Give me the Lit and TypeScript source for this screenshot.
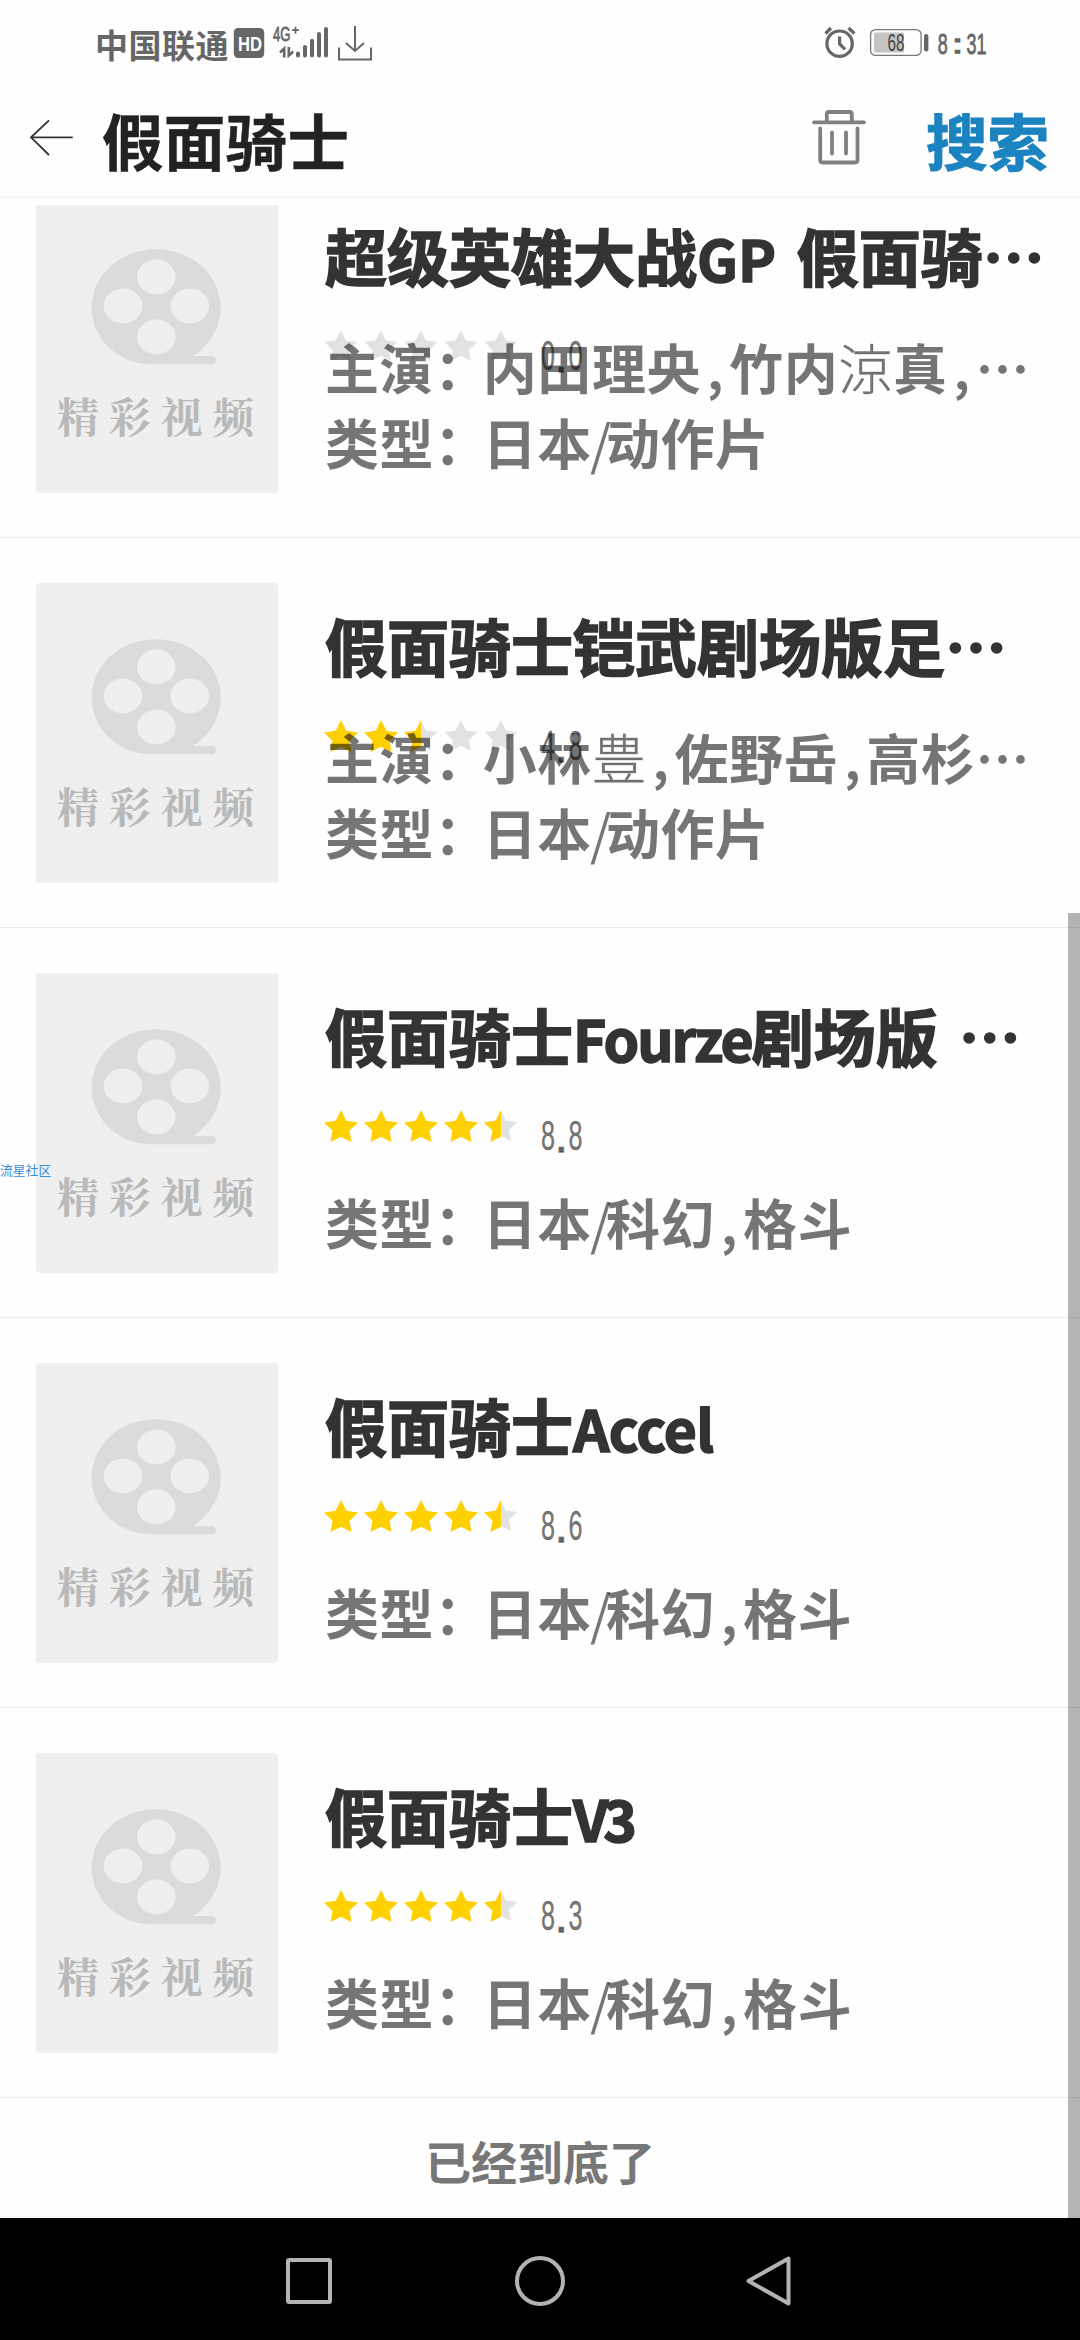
import { LitElement, html, svg, css, nothing } from "lit";
import { customElement, property } from "lit/decorators.js";
import { styleMap } from "lit/directives/style-map.js";

/** A piece of a line: plain text, or Latin text with its own tracking. */
type Run = string | { text: string; kind: "latin" | "colon" | "slash" | "comma" | "thin"; track?: number };

interface Movie {
  title: Run[];
  stars: number;
  score: string;
  cast?: Run[];
  genre: Run[];
}

const colon: Run = { text: "：", kind: "colon" };
const slash: Run = { text: "/", kind: "slash" };
const comma: Run = { text: ",", kind: "comma" };
const space: Run = { text: " ", kind: "latin", track: 8 };

const movies: Movie[] = [
  {
    title: ["超级英雄大战", { text: "GP", kind: "latin" }, space, "假面骑…"],
    stars: 0,
    score: "0.0",
    cast: ["主演", colon, "内田理央", comma, "竹内", { text: "涼", kind: "thin" }, "真", comma, "…"],
    genre: ["类型", colon, "日本", slash, "动作片"],
  },
  {
    title: ["假面骑士铠武剧场版足…"],
    stars: 2.5,
    score: "4.8",
    cast: ["主演", colon, "小林", { text: "豊", kind: "thin" }, comma, "佐野岳", comma, "高杉…"],
    genre: ["类型", colon, "日本", slash, "动作片"],
  },
  {
    title: ["假面骑士", { text: "Fourze", kind: "latin", track: -1.9 }, "剧场版", space, "…"],
    stars: 4.5,
    score: "8.8",
    genre: ["类型", colon, "日本", slash, "科幻", comma, "格斗"],
  },
  {
    title: ["假面骑士", { text: "Accel", kind: "latin", track: -0.8 }],
    stars: 4.5,
    score: "8.6",
    genre: ["类型", colon, "日本", slash, "科幻", comma, "格斗"],
  },
  {
    title: ["假面骑士", { text: "V3", kind: "latin", track: -5 }],
    stars: 4.5,
    score: "8.3",
    genre: ["类型", colon, "日本", slash, "科幻", comma, "格斗"],
  },
];

const renderRuns = (runs: Run[]) =>
  runs.map((run) =>
    typeof run === "string"
      ? run
      : html`<span class=${run.kind} style=${run.track ? styleMap({ letterSpacing: `${run.track}px` }) : nothing}>${run.text}</span>`,
  );

@customElement("status-bar")
class StatusBar extends LitElement {
  static styles = css`
    :host { display: flex; height: 86px; align-items: flex-start; justify-content: space-between; padding: 0 90px 0 95px; box-sizing: border-box; color: #666; }
    .left, .right { display: flex; }
    .carrier { font: 700 33px/48px "Noto Sans CJK SC", sans-serif; letter-spacing: 0.5px; margin-top: 19.500px; width: 135px; white-space: nowrap; }
    svg { display: block; overflow: visible; }
    text { font-family: "Liberation Sans", sans-serif; fill: #666; }
    .hd { fill: #fff; font-weight: 700; }
    .pct { fill: #444; }
  `;
  render() {
    return html`
      <div class="left">
        <span class="carrier">中国联通</span>
        <svg width="150" height="86" viewBox="230 0 150 86">
          <rect x="233.8" y="28" width="30.4" height="30" rx="4.5" fill="#666" />
          <text class="hd" x="238" y="50.6" font-size="21" textLength="24" lengthAdjust="spacingAndGlyphs">HD</text>
          <text x="273" y="41" font-size="20" textLength="17.5" lengthAdjust="spacingAndGlyphs" stroke="#666" stroke-width=".8">4G</text>
          <path d="M292 30.2h7M295.500 26.800v7" stroke="#666" stroke-width="1.7" />
          <path d="M284.200 57.500V48.500L280 52.500M288.800 47v8.500L293.200 51.500" fill="none" stroke="#666" stroke-width="2.600" />
          <g stroke="#666" stroke-width="4" stroke-linecap="round">
            <path d="M298 53.500v2M305 47v8.500M312 40.700v14.800M319 34v21.500M326 29v26.500" />
          </g>
          <path d="M355 26v25M346 43l9 8 9-8M339 47.500v12h32v-12" fill="none" stroke="#666" stroke-width="2" />
        </svg>
      </div>
      <div class="right">
        <svg width="170" height="86" viewBox="820 0 170 86">
          <g fill="none" stroke="#666" stroke-width="3.200">
            <circle cx="839.600" cy="43.700" r="12.700" />
            <path d="M839.600 36.500v7.500l5.500 5.300" />
            <path d="M825.500 33.500l5.500-5.500M848.500 28l6 5.500" />
          </g>
          <rect x="870.600" y="29.600" width="50.500" height="25.800" rx="5" fill="none" stroke="#777" stroke-width="1.300" />
          <rect x="874" y="32.500" width="30" height="20" rx="1.500" fill="#c4c4c4" />
          <rect x="924" y="34" width="4.400" height="17.500" rx="2.200" fill="#666" />
          <text class="pct" x="887.500" y="50.500" font-size="23" textLength="17" lengthAdjust="spacingAndGlyphs">68</text>
          <g stroke="#666" stroke-width=".8">
            <text x="937.800" y="54" font-size="30" textLength="10" lengthAdjust="spacingAndGlyphs">8</text>
            <text x="952.500" y="53" font-size="25" textLength="10" lengthAdjust="spacingAndGlyphs" stroke-width="1.500">:</text>
            <text x="966.500" y="54" font-size="30" textLength="20" lengthAdjust="spacingAndGlyphs">31</text>
          </g>
        </svg>
      </div>
    `;
  }
}

@customElement("search-header")
class SearchHeader extends LitElement {
  static styles = css`
    :host { display: flex; height: 112px; box-sizing: border-box; border-bottom: 2px solid #f6f6f6; font: 700 61.500px/90px "Noto Sans CJK SC", sans-serif; padding: 9px 31px 0 28px; }
    svg { display: block; flex: none; }
    .back { width: 48px; height: 60px; margin: 12px 26px 0 0; }
    .query { flex: 1; color: #222; letter-spacing: 0.3px; -webkit-text-stroke: 0.5px #222; }
    .trash { width: 60px; height: 70px; margin: 5px 57px 0 0; }
    .go { color: #1b83bf; -webkit-text-stroke: 1px #1b83bf; white-space: nowrap; }
  `;
  render() {
    return html`
      <svg class="back" viewBox="28 107 48 60">
        <path d="M72.700 137.300H31M49 120.300L31 137.300L49 155" fill="none" stroke="#333" stroke-width="1.800" />
      </svg>
      <div class="query">假面骑士</div>
      <svg class="trash" viewBox="809 100 60 70">
        <g fill="none" stroke="#808080" stroke-width="3.800" stroke-linecap="round" stroke-linejoin="round">
          <path d="M814 122.300h50M826.800 121v-7q0-2 2-2h21q2 0 2 2v7" />
          <path d="M820.200 128.500v31.500q0 2.500 2.500 2.500h32.300q2.500 0 2.500-2.500v-31.500M832 132.500v21M846 132.500v21" />
        </g>
      </svg>
      <div class="go">搜索</div>
    `;
  }
}

@customElement("star-rating")
class StarRating extends LitElement {
  @property({ type: Number }) value = 0;
  static styles = css`
    :host { display: flex; gap: 6px; }
    svg { display: block; width: 34px; height: 32px; }
  `;
  render() {
    const outline = "17,0 22.300,10.700 34,12.400 25.500,20.700 27.500,32 17,26.700 6.500,32 8.500,20.700 0,12.400 11.700,10.700";
    const half = "17,0 17,26.700 6.500,32 8.500,20.700 0,12.400 11.700,10.700";
    return [0, 1, 2, 3, 4].map((i) => {
      const rest = this.value - i;
      return html`<svg viewBox="0 0 34 32">
        ${rest < 1
          ? svg`<polygon points=${outline} fill="#e2e2e2" transform="translate(.5 .2) scale(.96)" />`
          : svg`<polygon points=${outline} fill="#ffd000" />`}
        ${rest === 0.5 ? svg`<polygon points=${half} fill="#ffd000" />` : nothing}
      </svg>`;
    });
  }
}

@customElement("movie-poster")
class MoviePoster extends LitElement {
  static styles = css`
    :host { display: flex; flex-direction: column; width: 242px; height: 300px; border-radius: 4px; background: #efefef; flex: none; }
    svg { display: block; width: 242px; height: 180px; }
    .caption { font: 700 42px/60px "Noto Serif CJK SC", "Noto Sans CJK SC", serif; letter-spacing: 9.800px; color: #b9b9b9; padding-left: 21px; white-space: nowrap; margin-top: 12px; }
  `;
  render() {
    return html`
      <svg viewBox="0 0 242 180">
        <path d="M120 56.300C156 56.300 184.700 82 184.700 115C184.700 135 173 153 157 163H176a4 4 0 0 1 0 8.300H113C81 170 55.700 145 55.700 115C55.700 82 84 56.300 120 56.300Z" fill="#dbdbdb" />
        <g fill="#efefef">
          <ellipse cx="120.300" cy="84" rx="19.300" ry="17.400" />
          <ellipse cx="87" cy="113" rx="19.300" ry="17.400" />
          <ellipse cx="153.800" cy="113" rx="19.300" ry="17.400" />
          <ellipse cx="120.300" cy="144" rx="19.300" ry="17.400" />
        </g>
      </svg>
      <div class="caption">精彩视频</div>
    `;
  }
}

@customElement("movie-row")
class MovieRow extends LitElement {
  @property({ attribute: false }) movie!: Movie;
  static styles = css`
    :host { display: flex; height: 390px; box-sizing: border-box; border-bottom: 1px solid #ececec; padding: 45px 0 0 36px; font-family: "Noto Sans CJK SC", sans-serif; white-space: pre; }
    .info { display: flex; flex-direction: column; margin-left: 47px; }
    .title { height: 130px; line-height: 124px; font-size: 62px; font-weight: 700; color: #333; -webkit-text-stroke: 1.600px #333; }
    .title .latin { font-size: 57px; }
    .rating { display: flex; height: 83.500px; box-sizing: border-box; padding-top: 7px; margin-left: -1px; }
    .score { display: block; width: 50px; height: 50px; margin-left: 21px; overflow: visible; }
    .score text { font-family: "Liberation Sans", sans-serif; font-size: 43px; fill: rgba(0, 0, 0, 0.54); }
    .digit { stroke: rgba(0, 0, 0, 0.4); stroke-width: 0.6px; }
    .line { height: 75px; line-height: 69px; font-size: 54px; letter-spacing: 0.600px; font-weight: 700; color: rgba(0, 0, 0, 0.54); }
    .cast { margin-top: -75px; }
    .colon { letter-spacing: -5.500px; }
    .slash, .comma { display: inline-block; font-weight: 400; letter-spacing: 0; }
    .slash { width: 14px; text-indent: -2px; }
    .comma { width: 28px; text-indent: 6px; font-weight: 700; font-size: 50px; }
    .thin { font-weight: 300; font-family: "Noto Sans CJK JP", sans-serif; -webkit-text-stroke: 0.4px rgba(0, 0, 0, 0.4); }
  `;
  render() {
    const m = this.movie;
    return html`
      <movie-poster></movie-poster>
      <div class="info"
        ><div class="title">${renderRuns(m.title)}</div
        ><div class="rating"
          ><star-rating .value=${m.stars}></star-rating
          ><svg class="score" viewBox="0 0 50 50"
            ><text class="digit" x="2" y="40" textLength="14" lengthAdjust="spacingAndGlyphs">${m.score[0]}</text
            ><text x="16.500" y="42" textLength="11.500" lengthAdjust="spacingAndGlyphs" stroke="rgba(0,0,0,.4)" stroke-width="2">${m.score[1]}</text
            ><text class="digit" x="29.500" y="40" textLength="14" lengthAdjust="spacingAndGlyphs">${m.score[2]}</text
          ></svg
        ></div
        >${m.cast ? html`<div class="line cast">${renderRuns(m.cast)}</div>` : nothing}<div class="line">${renderRuns(m.genre)}</div
      ></div>
    `;
  }
}

@customElement("nav-bar")
class NavBar extends LitElement {
  static styles = css`
    :host { display: flex; height: 122px; background: #000; justify-content: center; align-items: center; gap: 170px; padding-top: 4px; box-sizing: border-box; }
    svg { display: block; width: 60px; height: 60px; fill: none; stroke: #b3b3b3; stroke-width: 4px; stroke-linejoin: round; }
  `;
  render() {
    return html`
      <svg viewBox="0 0 60 60"><rect x="8" y="9" width="42" height="42" rx="1" /></svg>
      <svg viewBox="0 0 60 60"><circle cx="30" cy="30" r="23" /></svg>
      <svg viewBox="0 0 60 60"><path d="M48.500 7.500V52.500L8.500 30Z" /></svg>
    `;
  }
}

@customElement("app-root")
class AppRoot extends LitElement {
  static styles = css`
    :host { display: flex; flex-direction: column; position: relative; width: 1080px; height: 2340px; overflow: hidden; background: #fefefe; }
    .list { flex: 1; min-height: 0; overflow: hidden; margin-top: 7px; }
    .rows { margin-top: -57px; }
    .end { font: 700 46px/124px "Noto Sans CJK SC", sans-serif; height: 120px; text-align: center; color: #777; }
    .thumb { position: absolute; right: 0; top: 913px; width: 12px; height: 1305px; background: rgba(0, 0, 0, 0.29); }
    .mark { position: absolute; left: 0; top: 1160px; font: 400 12.800px/20px "Noto Sans CJK SC", sans-serif; color: #3b8bdc; }
  `;
  render() {
    return html`
      <status-bar></status-bar>
      <search-header></search-header>
      <div class="list">
        <div class="rows">${movies.map((m) => html`<movie-row .movie=${m}></movie-row>`)}</div>
        <div class="end">已经到底了</div>
      </div>
      <nav-bar></nav-bar>
      <div class="thumb"></div>
      <div class="mark">流星社区</div>
    `;
  }
}
